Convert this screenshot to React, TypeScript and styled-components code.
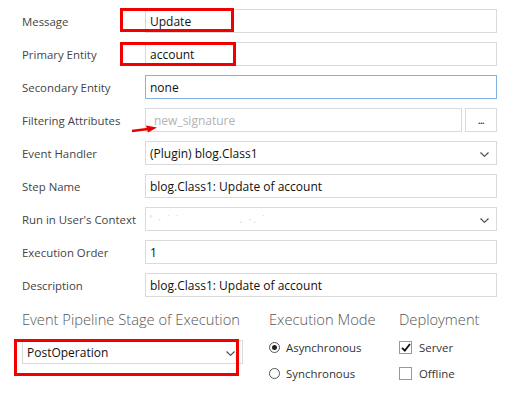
import { createGlobalStyle } from "styled-components";
import styled from "styled-components";

const GlobalStyle = createGlobalStyle`
  html, body {
    margin: 0;
    padding: 0;
    background: #ffffff;
  }
  body {
    font-family: "Open Sans", "Noto Sans", "Liberation Sans", sans-serif;
    color: #222;
  }
`;

const Page = styled.div`
  width: 521px;
  height: 402px;
  box-sizing: border-box;
  padding: 9px 24px 0 22px;
  overflow: hidden;
`;

const Form = styled.div`
  display: grid;
  grid-template-columns: 123px 352px;
  grid-auto-rows: 24px;
  row-gap: 9px;
`;

const Label = styled.div`
  display: flex;
  align-items: center;
  font-size: 11.4px;
  color: #444;
  white-space: nowrap;
`;

const Field = styled.div<{ $focused?: boolean }>`
  position: relative;
  display: flex;
  align-items: center;
  box-sizing: border-box;
  height: 24px;
  padding: 0 4px;
  border: 1px solid ${(p) => (p.$focused ? "#84b2e2" : "#dadada")};
  background: #fff;
  font-size: 12px;
  color: #111;
  white-space: nowrap;
`;

const Placeholder = styled.span`
  color: #b3b3b3;
  margin-left: 4px;
`;

const Faint = styled.span`
  color: #d0d0d0;
  letter-spacing: 2px;
  font-size: 10px;
`;

const LookupRow = styled.div`
  display: grid;
  grid-template-columns: 1fr 32px;
  column-gap: 3px;
`;

const DotsButton = styled.div`
  display: flex;
  align-items: flex-end;
  justify-content: center;
  box-sizing: border-box;
  height: 24px;
  padding-bottom: 6px;
  border: 1px solid #dadada;
  font-size: 9px;
  font-weight: 700;
  line-height: 1;
  color: #333;
  letter-spacing: -0.5px;
`;

const Chevron = styled.svg`
  position: absolute;
  right: 7px;
  top: 10px;
`;

const Callout = styled.div<{ $l: number; $t: number; $w: number; $h: number }>`
  position: absolute;
  left: ${(p) => p.$l}px;
  top: ${(p) => p.$t}px;
  width: ${(p) => p.$w}px;
  height: ${(p) => p.$h}px;
  box-sizing: border-box;
  border: 3px solid #f20000;
  pointer-events: none;
`;

const Arrow = styled.svg`
  position: absolute;
  left: -14px;
  top: 15px;
`;

const Options = styled.div`
  display: grid;
  grid-template-columns: 221px 104px 100px;
  column-gap: 26px;
  margin-top: 12px;
`;

const Column = styled.div`
  display: flex;
  flex-direction: column;
`;

const Heading = styled.div`
  height: 20px;
  line-height: 20px;
  font-size: 14.7px;
  font-weight: 300;
  color: #555;
  white-space: nowrap;
  margin-bottom: 11px;
`;

const Choice = styled.div`
  display: flex;
  align-items: center;
  gap: 6px;
  height: 26px;
  margin-top: -6px;
  margin-bottom: 6px;
  font-size: 11.4px;
  color: #333;
`;

const Radio = styled.span<{ $on?: boolean }>`
  position: relative;
  width: 11px;
  height: 11px;
  border-radius: 50%;
  border: 1px solid #555;
  box-sizing: border-box;
  &::after {
    content: "";
    display: ${(p) => (p.$on ? "block" : "none")};
    position: absolute;
    left: 2px;
    top: 2px;
    width: 5px;
    height: 5px;
    border-radius: 50%;
    background: #222;
  }
`;

const Check = styled.span`
  display: flex;
  align-items: center;
  justify-content: center;
  width: 13px;
  height: 13px;
  box-sizing: border-box;
  border: 1px solid #999;
  margin-right: 1px;
`;

const ChevronIcon = () => (
  <Chevron width="9" height="5" viewBox="0 0 9 5">
    <path d="M0.5 0.5 L4.5 4.3 L8.5 0.5" fill="none" stroke="#444" strokeWidth="1.1" />
  </Chevron>
);

export default function App() {
  return (
    <>
      <GlobalStyle />
      <Page>
        <Form>
          <Label>Message</Label>
          <Field>
            Update
            <Callout $l={-26} $t={-2} $w={114} $h={24} />
          </Field>

          <Label>Primary Entity</Label>
          <Field>
            account
            <Callout $l={-26} $t={-1} $w={116} $h={24} />
          </Field>

          <Label>Secondary Entity</Label>
          <Field $focused>none</Field>

          <Label>Filtering Attributes</Label>
          <LookupRow>
            <Field>
              <Placeholder>new_signature</Placeholder>
              <Arrow width="26" height="9" viewBox="0 0 26 9">
                <path d="M0 7 L16 5" stroke="#e60000" strokeWidth="2.4" />
                <path d="M14 1.5 L25 3.6 L16 8.5 Z" fill="#e60000" />
              </Arrow>
            </Field>
            <DotsButton>...</DotsButton>
          </LookupRow>

          <Label>Event Handler</Label>
          <Field>
            (Plugin) blog.Class1
            <ChevronIcon />
          </Field>

          <Label>Step Name</Label>
          <Field>blog.Class1: Update of account</Field>

          <Label>Run in User's Context</Label>
          <Field>
            <Faint>
              ʼ · ˙ ˙&nbsp;&nbsp;&nbsp;&nbsp;&nbsp;&nbsp;&nbsp;&nbsp;&nbsp;&nbsp;&nbsp;&nbsp;&nbsp;. ·. ˙
            </Faint>
            <ChevronIcon />
          </Field>

          <Label>Execution Order</Label>
          <Field>1</Field>

          <Label>Description</Label>
          <Field>blog.Class1: Update of account</Field>
        </Form>

        <Options>
          <Column>
            <Heading>Event Pipeline Stage of Execution</Heading>
            <Field>
              PostOperation
              <ChevronIcon />
              <Callout $l={-9} $t={-2} $w={225} $h={37} />
            </Field>
          </Column>
          <Column>
            <Heading>Execution Mode</Heading>
            <Choice>
              <Radio $on />
              Asynchronous
            </Choice>
            <Choice>
              <Radio />
              Synchronous
            </Choice>
          </Column>
          <Column>
            <Heading>Deployment</Heading>
            <Choice>
              <Check>
                <svg width="10" height="9" viewBox="0 0 10 9">
                  <path d="M1 4.8 L3.8 7.6 L9 1" fill="none" stroke="#111" strokeWidth="1.8" />
                </svg>
              </Check>
              Server
            </Choice>
            <Choice>
              <Check />
              Offline
            </Choice>
          </Column>
        </Options>
      </Page>
    </>
  );
}
